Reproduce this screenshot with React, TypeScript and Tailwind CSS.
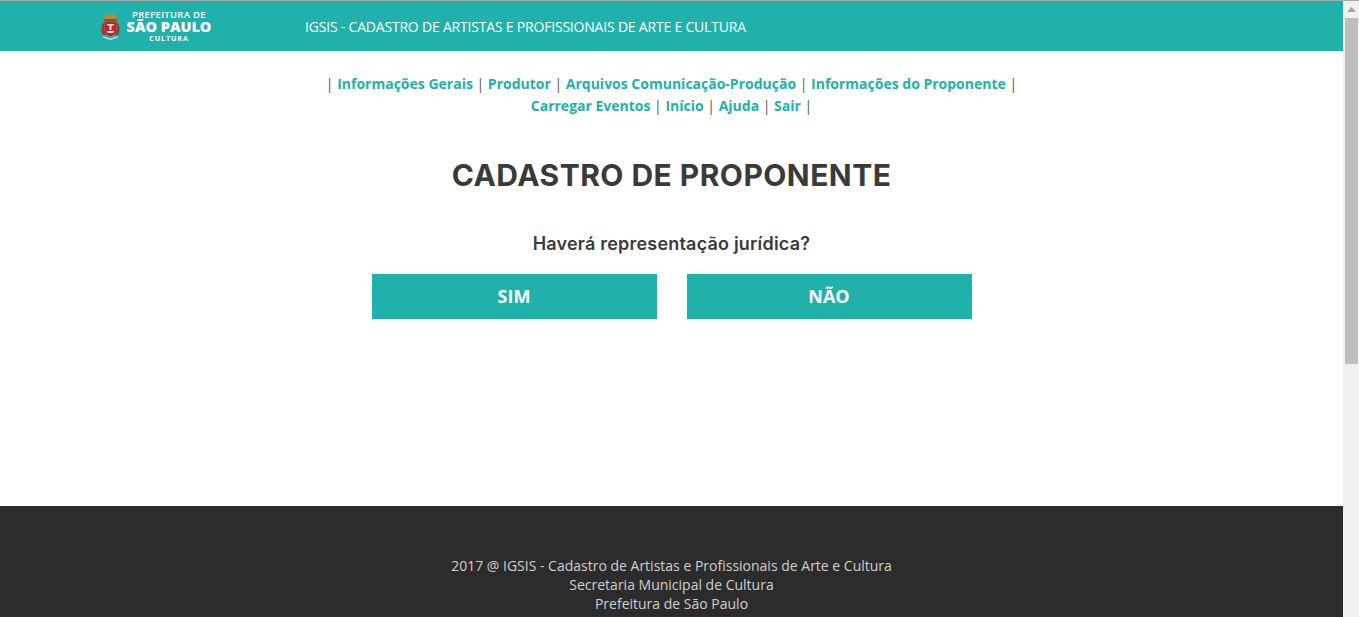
const menuLines = [
  ["Informações Gerais", "Produtor", "Arquivos Comunicação-Produção", "Informações do Proponente"],
  ["Carregar Eventos", "Início", "Ajuda", "Sair"],
];

function Crest() {
  return (
    <svg width="21" height="28" viewBox="0 0 21 28" className="shrink-0">
      {/* crown */}
      <path d="M4 8 L3.5 3.5 L6 5 L7.5 1.5 L10.5 4 L13.5 1.5 L15 5 L17.5 3.5 L17 8 Z" fill="#b98a3a" />
      <rect x="4" y="7" width="13" height="2" fill="#7a5a2a" />
      {/* side ornaments */}
      <path d="M3 11 C0.5 15 1 21 4 24 L6 22 C4 19 3.5 15 4.5 11 Z" fill="#a8382f" />
      <path d="M18 11 C20.5 15 20 21 17 24 L15 22 C17 19 17.5 15 16.5 11 Z" fill="#a8382f" />
      {/* shield */}
      <path d="M4.5 9.5 H16.5 V19 C16.5 22 13 23.5 10.5 24.5 C8 23.5 4.5 22 4.5 19 Z" fill="#c8202a" />
      <path d="M7 12 H14 V13.5 H11.5 V18 H9.5 V13.5 H7 Z" fill="#f4e6e0" />
      <path d="M6.5 19 L14.5 19 L13 21 L8 21 Z" fill="#f4e6e0" />
      {/* ribbon */}
      <path d="M3 24 L10.5 26.5 L18 24 L18 25.5 L10.5 28 L3 25.5 Z" fill="#d8d8c8" />
    </svg>
  );
}

function Scrollbar() {
  return (
    <div className="w-4 shrink-0 bg-[#f0f0f0] flex flex-col items-center">
      <div className="h-[17px] w-full flex items-center justify-center">
        <svg width="9" height="5" viewBox="0 0 9 5">
          <path d="M4.5 0 L9 5 H0 Z" fill="#a3a3a3" />
        </svg>
      </div>
      <div className="w-[13px] h-[346px] bg-[#bebebe]" />
    </div>
  );
}

export default function App() {
  return (
    <div className="h-[617px] overflow-hidden flex flex-col font-['Open_Sans',sans-serif]">
      <div className="h-px shrink-0 bg-[#a9a9a9]" />
      <div className="flex flex-1 min-h-0">
        <div className="flex-1 min-w-0 flex flex-col bg-white">
          <header className="h-[50px] shrink-0 bg-[#20b2aa] flex items-center pl-[100px]">
            <Crest />
            <div className="w-[86px] ml-[5px] flex flex-col items-center text-white">
              <span className="text-[9.5px] leading-[10px] font-semibold tracking-[0.3px] whitespace-nowrap">PREFEITURA DE</span>
              <span className="text-[14.5px] leading-[14px] font-extrabold whitespace-nowrap">SÃO PAULO</span>
              <span className="text-[7px] leading-[9px] font-bold tracking-[1px]">CULTURA</span>
            </div>
            <span className="ml-[93px] text-[14px] tracking-[-0.2px] text-white whitespace-nowrap">
              IGSIS - CADASTRO DE ARTISTAS E PROFISSIONAIS DE ARTE E CULTURA
            </span>
          </header>

          <main className="flex-1 min-h-0 flex flex-col items-center">
            <nav className="mt-[22px] text-[14px] leading-[22px] text-[#555] text-center">
              {menuLines.map((line, i) => (
                <div key={i} className="whitespace-nowrap">
                  {i === 0 && "| "}
                  {line.map((item, j) => (
                    <span key={item}>
                      <a className="font-bold text-[#20b2aa]">{item}</a>
                      {" | "}
                    </span>
                  ))}
                </div>
              ))}
            </nav>
            <h1 className="mt-[38px] text-[30px] leading-[40px] font-bold tracking-[0.45px] text-[#3a3a3a] font-['Inter',sans-serif]">
              CADASTRO DE PROPONENTE
            </h1>
            <h2 className="mt-[37px] text-[18px] leading-[24px] font-semibold tracking-[0.2px] text-[#3a3a3a] font-['Inter',sans-serif]">
              Haverá representação jurídica?
            </h2>
            <div className="mt-[18px] flex gap-[30px]">
              <button className="w-[285px] h-[45px] bg-[#20b2aa] text-white text-[18px] font-bold">SIM</button>
              <button className="w-[285px] h-[45px] bg-[#20b2aa] text-white text-[18px] font-bold">NÃO</button>
            </div>
          </main>

          <footer className="h-[111px] shrink-0 bg-[#2c2c2c] pt-[50px] flex flex-col items-center text-[14px] leading-[19px] text-[#cfcfcf]">
            <p>2017 @ IGSIS - Cadastro de Artistas e Profissionais de Arte e Cultura</p>
            <p>Secretaria Municipal de Cultura</p>
            <p>Prefeitura de São Paulo</p>
          </footer>
        </div>
        <Scrollbar />
      </div>
    </div>
  );
}
